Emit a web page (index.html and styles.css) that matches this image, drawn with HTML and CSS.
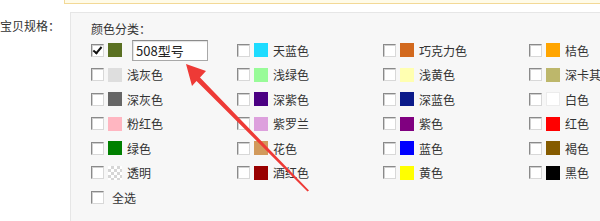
FILE: index.html
```html
<!DOCTYPE html>
<html lang="zh-CN">
<head>
    <meta charset="UTF-8">
    <title>宝贝规格</title>
    <link rel="stylesheet" href="styles.css">
</head>
<body>

    <div class="notice"></div>

    <div class="spec">
        <div class="spec-label">宝贝规格：</div>

        <div class="spec-panel">
            <div class="group-title">颜色分类：</div>

            <div class="color-grid">
                <div class="item">
                    <span class="cb checked"></span>
                    <span class="sw" style="background:#5a7022"></span>
                    <span class="alias">508型号</span>
                </div>
                <div class="item"><span class="cb"></span><span class="sw" style="background:#1edcff"></span>天蓝色</div>
                <div class="item"><span class="cb"></span><span class="sw" style="background:#d2691e"></span>巧克力色</div>
                <div class="item"><span class="cb"></span><span class="sw" style="background:#ffa500"></span>桔色</div>

                <div class="item"><span class="cb"></span><span class="sw" style="background:#dedede"></span>浅灰色</div>
                <div class="item"><span class="cb"></span><span class="sw" style="background:#98fb98"></span>浅绿色</div>
                <div class="item"><span class="cb"></span><span class="sw" style="background:#ffffb1"></span>浅黄色</div>
                <div class="item"><span class="cb"></span><span class="sw" style="background:#bdb76b"></span>深卡其</div>

                <div class="item"><span class="cb"></span><span class="sw" style="background:#666666"></span>深灰色</div>
                <div class="item"><span class="cb"></span><span class="sw" style="background:#4b0082"></span>深紫色</div>
                <div class="item"><span class="cb"></span><span class="sw" style="background:#0b1a8a"></span>深蓝色</div>
                <div class="item"><span class="cb"></span><span class="sw white"></span>白色</div>

                <div class="item"><span class="cb"></span><span class="sw" style="background:#ffb6c1"></span>粉红色</div>
                <div class="item"><span class="cb"></span><span class="sw" style="background:#dda0dd"></span>紫罗兰</div>
                <div class="item"><span class="cb"></span><span class="sw" style="background:#800080"></span>紫色</div>
                <div class="item"><span class="cb"></span><span class="sw" style="background:#ff0000"></span>红色</div>

                <div class="item"><span class="cb"></span><span class="sw" style="background:#008000"></span>绿色</div>
                <div class="item"><span class="cb"></span><span class="sw" style="background:#d29a5c"></span>花色</div>
                <div class="item"><span class="cb"></span><span class="sw" style="background:#0000ff"></span>蓝色</div>
                <div class="item"><span class="cb"></span><span class="sw" style="background:#855b00"></span>褐色</div>

                <div class="item"><span class="cb"></span><span class="sw clear"></span>透明</div>
                <div class="item"><span class="cb"></span><span class="sw" style="background:#990000"></span>酒红色</div>
                <div class="item"><span class="cb"></span><span class="sw" style="background:#ffff00"></span>黄色</div>
                <div class="item"><span class="cb"></span><span class="sw" style="background:#000000"></span>黑色</div>

                <div class="item all"><span class="cb"></span>全选</div>
            </div>
        </div>
    </div>

    <!-- red arrow pointing at the alias box -->
    <svg class="arrow" width="600" height="221" viewBox="0 0 600 221">
        <polygon points="186,64 206,71 200,77.5 309,190.5 307.5,191.5 196.5,81 192,86" fill="#ee3a36"/>
    </svg>

</body>
</html>
```

FILE: styles.css
```css
html, body {
    margin: 0;
    padding: 0;
    background: #fff;
    color: #333;
    font-family: "Noto Sans CJK SC", "Microsoft YaHei", sans-serif;
    font-size: 12px;
    overflow: hidden;
}

body {
    position: relative;
    width: 600px;
    height: 221px;
}

/* yellow tip box, only its bottom edge shows */
.notice {
    margin-left: 64px;
    height: 3px;
    background: #fffbe8;
    border: 1px solid #f3d996;
    border-top: none;
    border-right: none;
}

.spec {
    display: flex;
    margin-top: 8px;
}

.spec-label {
    width: 58px;
    flex: none;
    text-align: right;
    white-space: nowrap;
    line-height: 16px;
    padding-top: 6px;
    margin-right: 12px;
}

.spec-panel {
    flex: 1;
    min-width: 0;
    height: 201px;
    overflow: hidden;
    background: #f7f7f7;
    border: 1px solid #e6e6e6;
    border-right: none;
    border-bottom: none;
    padding: 8px 0 0 20px;
}

.group-title {
    line-height: 16px;
}

.color-grid {
    display: grid;
    grid-template-columns: repeat(3, 146px) 1fr;
    grid-auto-rows: 24.5px;
    margin-top: 1px;
}

.item {
    display: flex;
    align-items: center;
    white-space: nowrap;
    overflow: hidden;
}

/* old windows style checkbox */
.cb {
    box-sizing: border-box;
    width: 13px;
    height: 13px;
    flex: none;
    background: #fff;
    border: 1px solid #8a8a8a;
    border-right-color: #d8d8d8;
    border-bottom-color: #d8d8d8;
    box-shadow: inset 1px 1px 0 #d0d0d0;
    margin-right: 4px;
    position: relative;
}

.cb.checked::after {
    content: "";
    position: absolute;
    left: 3px;
    top: 0px;
    width: 3px;
    height: 7px;
    border: solid #111;
    border-width: 0 2px 2px 0;
    transform: rotate(40deg);
}

.sw {
    width: 14px;
    height: 14px;
    flex: none;
    margin-right: 5px;
}

.sw.white {
    box-sizing: border-box;
    background: #fff;
    border: 1px solid #ececec;
}

.sw.clear {
    background-color: #fff;
    background-image:
        linear-gradient(45deg, #d6d6d6 25%, transparent 25%, transparent 75%, #d6d6d6 75%),
        linear-gradient(45deg, #d6d6d6 25%, transparent 25%, transparent 75%, #d6d6d6 75%);
    background-size: 6px 6px;
    background-position: 0 0, 3px 3px;
}

.alias {
    box-sizing: border-box;
    width: 76px;
    height: 21px;
    margin-left: 5px;
    padding-left: 3px;
    background: #fff;
    border: 1px solid #a8a8a8;
    border-top-color: #8c8c8c;
    box-shadow: inset 1px 1px 1px #e2e2e2;
    font-size: 13px;
    line-height: 19px;
    color: #222;
}

.all .cb {
    margin-right: 8px;
}

.arrow {
    position: absolute;
    left: 0;
    top: 0;
    pointer-events: none;
}
```
